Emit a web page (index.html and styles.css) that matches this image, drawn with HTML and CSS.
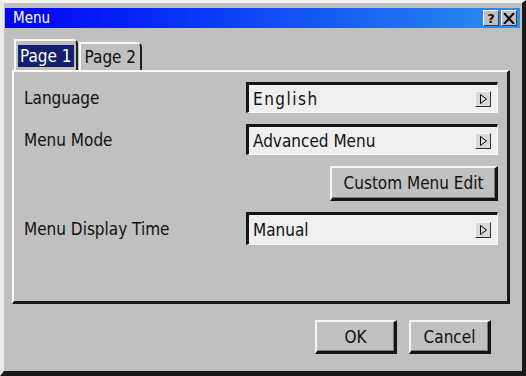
FILE: index.html
```html
<!DOCTYPE html>
<html lang="en">
<head>
    <meta charset="UTF-8">
    <title>Menu</title>
    <link rel="stylesheet" href="styles.css">
</head>
<body>

<div class="window">
    <div class="titlebar">
        <span class="title">Menu</span>
        <div class="caption-btns">
            <span class="cap-btn">?</span>
            <span class="cap-btn">
                <svg width="12" height="11" viewBox="0 0 12 11"><path d="M1 0 L11 11 M11 0 L1 11" stroke="#000" stroke-width="2"/></svg>
            </span>
        </div>
    </div>

    <div class="tabs">
        <div class="tab active"><span>Page 1</span></div>
        <div class="tab"><span>Page 2</span></div>
    </div>

    <div class="panel">
        <div class="label">Language</div>
        <div class="field">
            <span class="value spaced">English</span>
            <span class="arrow"><svg width="9" height="10" viewBox="0 0 9 10"><path d="M1.5 0.5 L7.5 5 L1.5 9.5 Z" fill="none" stroke="#000" stroke-width="1"/></svg></span>
        </div>

        <div class="label">Menu Mode</div>
        <div class="field">
            <span class="value">Advanced Menu</span>
            <span class="arrow"><svg width="9" height="10" viewBox="0 0 9 10"><path d="M1.5 0.5 L7.5 5 L1.5 9.5 Z" fill="none" stroke="#000" stroke-width="1"/></svg></span>
        </div>

        <div></div>
        <div class="btn-cell"><button class="btn wide">Custom Menu Edit</button></div>

        <div class="label">Menu Display Time</div>
        <div class="field tall">
            <span class="value">Manual</span>
            <span class="arrow"><svg width="9" height="10" viewBox="0 0 9 10"><path d="M1.5 0.5 L7.5 5 L1.5 9.5 Z" fill="none" stroke="#000" stroke-width="1"/></svg></span>
        </div>
    </div>

    <div class="footer">
        <button class="btn">OK</button>
        <button class="btn">Cancel</button>
    </div>
</div>

</body>
</html>
```

FILE: styles.css
```css
body {
    margin: 0;
    background-color: #c0c0c0;
    font-family: "DejaVu Sans Condensed", "DejaVu Sans", sans-serif;
    font-size: 16px;
    color: #111;
}
.window {
    width: 526px;
    height: 376px;
    box-sizing: border-box;
    background-color: #c0c0c0;
    border-style: solid;
    border-width: 3px 4px 5px 4px;
    border-color: #f2f2f2 #1a1a1a #1a1a1a #eaeaea;
    padding: 5px 2px 0 1px;
}
.titlebar {
    height: 20px;
    display: flex;
    align-items: center;
    justify-content: space-between;
    background: linear-gradient(to right, #0000f4, #0a3cf8 40%, #2a90ee);
    padding: 0 3px 0 8px;
}
.title {
    color: #fff;
    font-size: 15px;
}
.caption-btns {
    display: flex;
    gap: 2px;
}
.cap-btn {
    width: 14px;
    height: 14px;
    display: flex;
    align-items: center;
    justify-content: center;
    background-color: #c0c0c0;
    border: 1px solid;
    border-color: #fff #404040 #404040 #fff;
    font-family: "DejaVu Sans", sans-serif;
    font-weight: bold;
    font-size: 13px;
    line-height: 1;
}
.tabs {
    display: flex;
    align-items: flex-end;
    height: 31px;
    margin-top: 11px;
    padding-left: 9px;
}
.tab {
    height: 28px;
    box-sizing: border-box;
    border-style: solid;
    border-width: 2px 2px 0 2px;
    border-color: #f6f6f6 #202020 #c0c0c0 #f6f6f6;
    border-top-right-radius: 5px;
    display: flex;
    align-items: center;
    padding: 0 2px;
    margin-right: 1px;
}
.tab.active {
    height: 31px;
}
.tab span {
    padding: 1px 2px;
    font-size: 17px;
}
.tab.active span {
    background-color: #14206e;
    color: #fff;
}
.panel {
    height: 234px;
    box-sizing: border-box;
    margin: 0 10px 0 7px;
    border-style: solid;
    border-width: 2px 3px 3px 2px;
    border-color: #fafafa #1a1a1a #1a1a1a #fafafa;
    padding: 10px 9px 0 10px;
    display: grid;
    grid-template-columns: 1fr 252px;
    grid-auto-rows: min-content;
    row-gap: 11px;
    align-items: center;
}
.label {
    font-size: 17px;
}
.field {
    height: 31px;
    box-sizing: border-box;
    background-color: #efefef;
    border-style: solid;
    border-width: 3px 1px 1px 3px;
    border-color: #151515 #fafafa #fafafa #151515;
    display: flex;
    align-items: center;
    justify-content: space-between;
    padding: 0 6px 0 4px;
}
.field.tall {
    height: 33px;
}
.value {
    font-size: 17px;
}
.spaced {
    letter-spacing: 1.5px;
}
.arrow {
    width: 14px;
    height: 14px;
    display: flex;
    align-items: center;
    justify-content: center;
    background-color: #d8d8d8;
    border: 1px solid;
    border-color: #f8f8f8 #303030 #303030 #f8f8f8;
}
.btn-cell {
    display: flex;
    justify-content: flex-end;
}
.btn {
    height: 34px;
    width: 82px;
    box-sizing: border-box;
    background-color: #c0c0c0;
    border-style: solid;
    border-width: 2px 3px 3px 2px;
    border-color: #f6f6f6 #151515 #151515 #f6f6f6;
    box-shadow: inset -1px -1px #7a7a7a;
    font-family: inherit;
    font-size: 17px;
    color: #111;
    padding: 0;
}
.btn.wide {
    width: 168px;
    height: 35px;
}
.footer {
    display: flex;
    justify-content: flex-end;
    gap: 12px;
    margin-top: 16px;
    padding-right: 29px;
}
```
